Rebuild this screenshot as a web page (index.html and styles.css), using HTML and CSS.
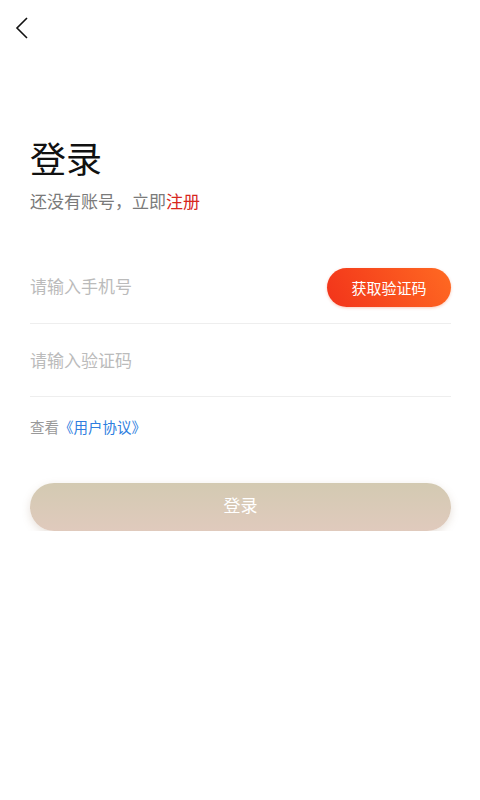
FILE: index.html
```html
<!DOCTYPE html>
<html>
<head>
  <title>登录</title>
  <link rel="stylesheet" href="styles.css">
</head>
<body>
  <div class="page">
    <div class="nav">
      <svg class="back" width="14" height="24" viewBox="0 0 14 24">
        <path d="M12 2 L2 12 L12 22" fill="none" stroke="#111" stroke-width="1.6"/>
      </svg>
    </div>

    <div class="head">
      <h1>登录</h1>
      <p class="sub">还没有账号，立即<span class="reg">注册</span></p>
    </div>

    <div class="form">
      <div class="row phone">
        <input type="text" placeholder="请输入手机号">
        <button class="code-btn">获取验证码</button>
      </div>
      <div class="row code">
        <input type="text" placeholder="请输入验证码">
      </div>
      <p class="agree">查看<span class="link">《用户协议》</span></p>
      <button class="login-btn">登录</button>
    </div>
  </div>
</body>
</html>
```

FILE: styles.css
```css
body {
  margin: 0;
  background-color: #fff;
  font-family: "Noto Sans CJK SC", "Noto Sans", sans-serif;
}

.page {
  padding: 0 29px 0 30px;
}

.nav {
  height: 56px;
  display: flex;
  align-items: center;
  margin-left: -15px;
}

.back {
  display: block;
  margin-top: -1px;
}

.head {
  padding-top: 76px;
}

h1 {
  margin: 0;
  font-size: 36px;
  font-weight: 400;
  line-height: 50px;
  color: #111;
}

.sub {
  margin: 7px 0 0;
  font-size: 17px;
  line-height: 24px;
  color: #7a7a7a;
}

.reg {
  color: #d7261e;
}

.form {
  margin-top: 45px;
}

.row {
  display: flex;
  align-items: flex-start;
  border-bottom: 1px solid #eeeeee;
}

.row input {
  flex: 1;
  min-width: 0;
  border: none;
  outline: none;
  padding: 0;
  font-family: inherit;
  font-size: 17px;
  color: #333;
  background: transparent;
}

.row input::placeholder {
  color: #bbbbbb;
}

.phone {
  height: 65px;
}

.phone input {
  margin-top: 15px;
}

.code-btn {
  width: 124px;
  height: 39px;
  margin-top: 10px;
  border: none;
  border-radius: 20px;
  background: linear-gradient(60deg, #f2331a, #ff6a22);
  color: #fff;
  font-family: inherit;
  font-size: 15px;
  box-shadow: 0 1px 3px rgba(240, 80, 30, 0.3);
}

.code {
  height: 72px;
}

.code input {
  margin-top: 23px;
}

.agree {
  margin: 20px 0 0;
  font-size: 14.5px;
  line-height: 20px;
  color: #999;
}

.link {
  color: #2e7ee0;
}

.login-btn {
  display: block;
  width: 100%;
  height: 48px;
  margin-top: 46px;
  padding: 0 0 5px;
  border: none;
  border-radius: 24px;
  background: linear-gradient(180deg, #d3cab2, #e0cabd);
  color: #fff;
  font-family: inherit;
  font-size: 17px;
  box-shadow: 0 3px 8px rgba(150, 120, 90, 0.22);
}
```
